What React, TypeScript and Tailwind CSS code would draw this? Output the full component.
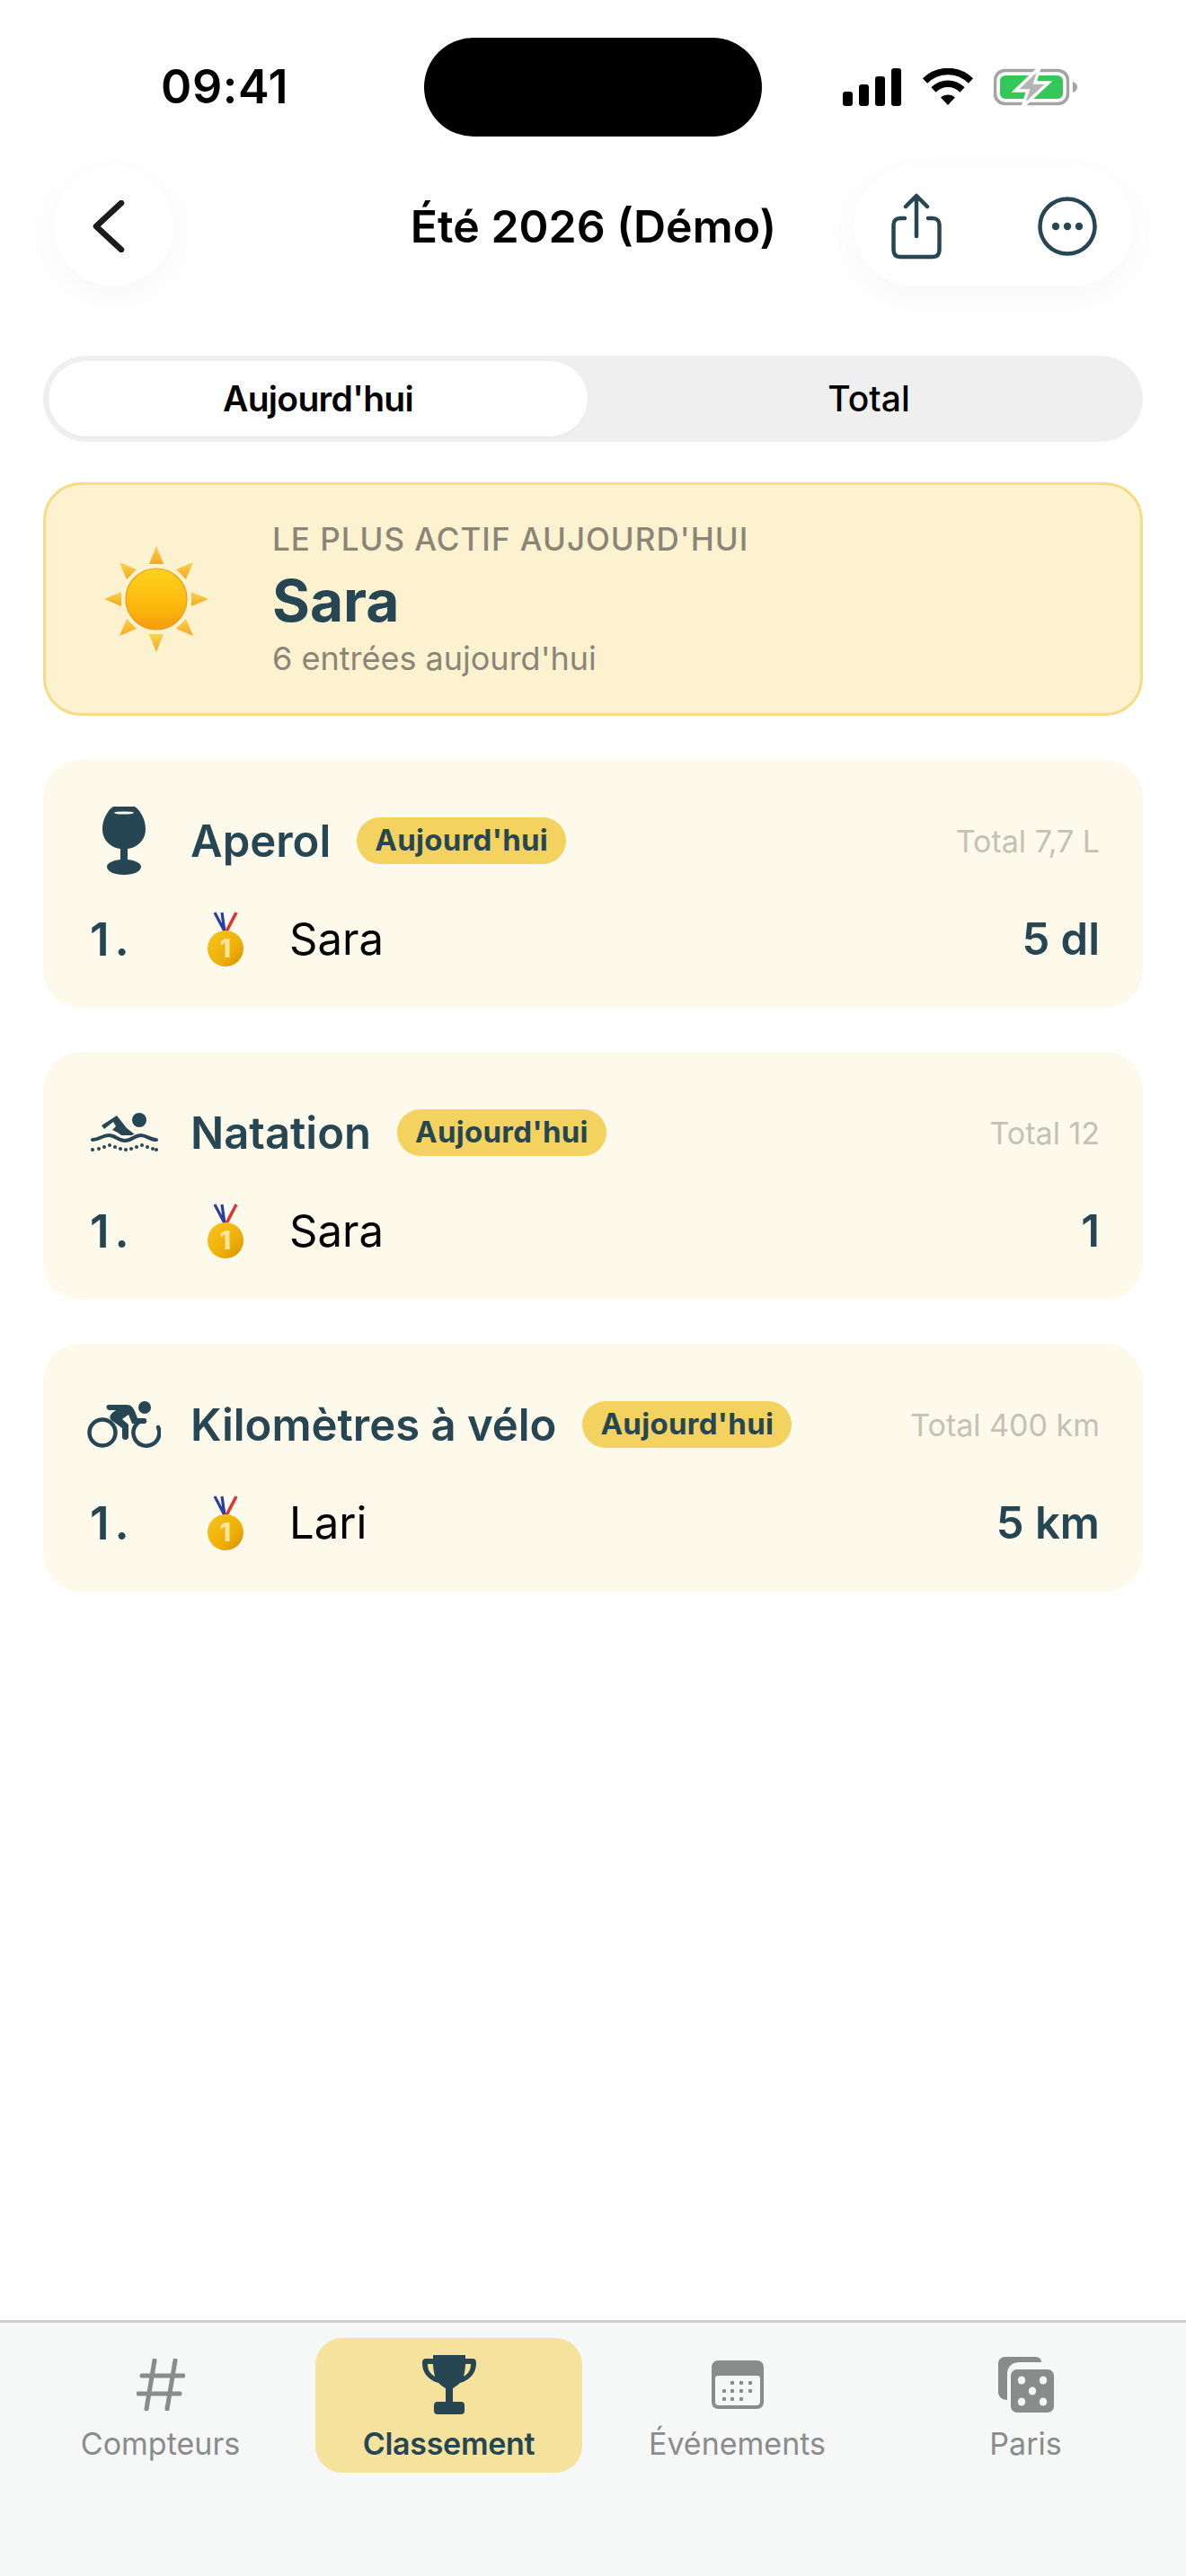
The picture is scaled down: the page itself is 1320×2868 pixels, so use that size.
const NAVY = "#264653";

const Sun = () => (
  <svg width="120" height="120" viewBox="0 0 120 120">
    <defs>
      <linearGradient id="sunBody" x1="0" y1="0" x2="0" y2="1">
        <stop offset="0" stopColor="#ffd21f" />
        <stop offset="0.7" stopColor="#fbb40a" />
        <stop offset="1" stopColor="#f39a12" />
      </linearGradient>
      <linearGradient id="sunRay" x1="0" y1="0" x2="0" y2="1">
        <stop offset="0" stopColor="#fbd24a" />
        <stop offset="1" stopColor="#f6a821" />
      </linearGradient>
    </defs>
    <g fill="url(#sunRay)">
      <polygon points="60,1 68,21 52,21" />
      <polygon points="60,119 68,99 52,99" />
      <polygon points="2,60 21,52 21,68" />
      <polygon points="118,60 99,52 99,68" />
      <polygon points="19,19 38,27 27,38" />
      <polygon points="101,19 82,27 93,38" />
      <polygon points="19,101 38,93 27,82" />
      <polygon points="101,101 82,93 93,82" />
    </g>
    <circle cx="60" cy="60" r="34" fill="url(#sunBody)" stroke="#ee9a1c" strokeWidth="1.2" />
  </svg>
);

const Medal = () => (
  <svg width="42" height="62" viewBox="0 0 42 62">
    <defs>
      <linearGradient id="medalGold" x1="0" y1="0" x2="1" y2="1">
        <stop offset="0" stopColor="#f7c51e" />
        <stop offset="0.6" stopColor="#efb008" />
        <stop offset="1" stopColor="#d98f00" />
      </linearGradient>
    </defs>
    <path d="M21 22 L9 1 H33 Z" fill="#ffffff" />
    <path d="M20 22 L9 1 M20 22 L17 1" fill="none" stroke="#2a3f9e" strokeWidth="3.2" />
    <path d="M22 22 L33 1" fill="none" stroke="#e0352b" strokeWidth="3.6" />
    <circle cx="21" cy="41" r="20" fill="url(#medalGold)" />
    <text x="21" y="51" textAnchor="middle" fontSize="28" fontWeight="800" fontFamily="Inter" fill="#fbe59a">1</text>
  </svg>
);

const Wine = () => (
  <svg width="48" height="76" viewBox="0 0 48 76">
    <path d="M12 0 H36 C43 5 48 15 48 25 C48 38 38 46 28 47 V59 C37 60 43 63 43 67 C43 72 35 76 24 76 C13 76 5 72 5 67 C5 63 11 60 20 59 V47 C10 46 0 38 0 25 C0 15 5 5 12 0 Z" fill={NAVY} />
    <ellipse cx="24" cy="7" rx="11" ry="1.6" fill="#fefaeb" />
  </svg>
);

const Swim = () => (
  <svg width="76" height="44" viewBox="0 0 76 44">
    <circle cx="55" cy="8" r="8" fill={NAVY} />
    <path d="M13 14 L30 3 L41 17 L50 24 C44 24 38 26 33 23 C30 21 27 20 25 19 L29 15 L26 10 L16 18 Z" fill={NAVY} />
    <path d="M27 18 L35 13 L48 25 L35 25 Z" fill={NAVY} />
    <path d="M3 30 C10 30 14 25 21 25 C29 25 31 31 39 31 C47 31 49 25 57 25 C63 25 67 30 74 30" fill="none" stroke={NAVY} strokeWidth="4" strokeLinecap="round" />
    <g fill={NAVY}>
      <circle cx="3" cy="41" r="2" /><circle cx="10" cy="40" r="2" /><circle cx="16" cy="38" r="2" />
      <circle cx="22" cy="36" r="2" /><circle cx="28" cy="38" r="2" /><circle cx="34" cy="40" r="2" />
      <circle cx="40" cy="41" r="2" /><circle cx="46" cy="40" r="2" /><circle cx="52" cy="38" r="2" />
      <circle cx="58" cy="36" r="2" /><circle cx="64" cy="38" r="2" /><circle cx="70" cy="40" r="2" /><circle cx="74" cy="41" r="2" />
    </g>
  </svg>
);

const Bike = () => (
  <svg width="82" height="52" viewBox="0 0 82 52">
    <circle cx="17" cy="35" r="14.5" fill="none" stroke={NAVY} strokeWidth="4.5" />
    <path d="M58 23 A14.5 14.5 0 1 0 79 29" fill="none" stroke={NAVY} strokeWidth="4.5" strokeLinecap="round" />
    <circle cx="64" cy="7" r="7" fill={NAVY} />
    <path d="M24 4 H44 C49 4 51 7 53 11 L56 19 H64 C67 19 67 25 64 25 H50 L46 15 L39 20 L46 26 V40 C46 44 39 44 39 40 V30 L28 22 C24 19 25 16 28 13 L32 10 H25 C21 10 20 4 24 4 Z" fill={NAVY} />
  </svg>
);

const Share = () => (
  <svg width="56" height="74" viewBox="0 0 56 74" fill="none" stroke={NAVY} strokeWidth="4.5" strokeLinecap="round" strokeLinejoin="round">
    <path d="M15 28 H10 C5 28 2.5 31 2.5 35 V63 C2.5 68 5 71 10 71 H46 C51 71 53.5 68 53.5 63 V35 C53.5 31 51 28 46 28 H41" />
    <path d="M28 48 V4 M16 15 L28 3 L40 15" />
  </svg>
);

const More = () => (
  <svg width="66" height="66" viewBox="0 0 66 66">
    <circle cx="33" cy="33" r="30.5" fill="none" stroke={NAVY} strokeWidth="4.5" />
    <circle cx="20" cy="33" r="4.2" fill={NAVY} />
    <circle cx="33" cy="33" r="4.2" fill={NAVY} />
    <circle cx="46" cy="33" r="4.2" fill={NAVY} />
  </svg>
);

const Signal = () => (
  <svg width="66" height="42" viewBox="0 0 66 42" fill="#000">
    <rect x="0" y="26" width="11" height="16" rx="3" />
    <rect x="18" y="18" width="11" height="24" rx="3" />
    <rect x="36" y="9" width="11" height="33" rx="3" />
    <rect x="54" y="0" width="11" height="42" rx="3" />
  </svg>
);

const Wifi = () => (
  <svg width="58" height="42" viewBox="0 0 58 42" fill="none" stroke="#000" strokeWidth="7.5">
    <path d="M3.5 14 C18 0 40 0 54.5 14" />
    <path d="M13 24 C22 15 36 15 45 24" />
    <path d="M29 41 L21 32.5 C25 28.5 33 28.5 37 32.5 Z" fill="#000" stroke="none" />
  </svg>
);

const Battery = () => (
  <svg width="94" height="44" viewBox="0 0 94 44">
    <rect x="1.5" y="3.5" width="81" height="37" rx="11" fill="none" stroke="#a3a3a3" strokeWidth="3.5" />
    <rect x="7" y="9" width="70" height="26" rx="6" fill="#34c759" />
    <path d="M88 16 C91 17 93 19 93 22 C93 25 91 27 88 28 Z" fill="#a3a3a3" />
    <path d="M51 0 L24 26 H38 L32 44 L61 17 H46 Z" fill="#b4b4b4" stroke="#ffffff" strokeWidth="3.5" />
  </svg>
);

const Hash = () => (
  <svg width="54" height="58" viewBox="0 0 54 58" fill="none" stroke="#8a8c8c" strokeWidth="5" strokeLinecap="round">
    <path d="M20 2 L11 56 M43 2 L34 56 M6 19 H52 M2 39 H48" />
  </svg>
);

const Trophy = () => (
  <svg width="60" height="66" viewBox="0 0 60 66">
    <path d="M12 0 H48 V4 H56 C59 4 60 6 60 9 C60 20 53 28 42 31 C39 34 36 36 34 37 V52 H26 V37 C24 36 21 34 18 31 C7 28 0 20 0 9 C0 6 1 4 4 4 H12 Z M6 10 C6 17 9 21 14 24 C13 19 12 15 12 10 Z M54 10 H48 C48 15 47 19 46 24 C51 21 54 17 54 10 Z" fill={NAVY} fillRule="evenodd" />
    <rect x="13" y="52" width="34" height="14" rx="4" fill={NAVY} />
  </svg>
);

const Calendar = () => (
  <svg width="58" height="54" viewBox="0 0 58 54" fill="#8a8c8c">
    <path fillRule="evenodd" d="M8 0 H50 C55 0 58 3 58 8 V46 C58 51 55 54 50 54 H8 C3 54 0 51 0 46 V8 C0 3 3 0 8 0 Z M7 17 C5 17 4 18 4 20 V46 C4 48 5 50 8 50 H50 C53 50 54 48 54 46 V20 C54 18 53 17 51 17 Z" />
    <rect x="21" y="23" width="4" height="4" rx="1" /><rect x="31" y="23" width="4" height="4" rx="1" /><rect x="41" y="23" width="4" height="4" rx="1" />
    <rect x="12" y="32" width="4" height="4" rx="1" /><rect x="21" y="32" width="4" height="4" rx="1" /><rect x="31" y="32" width="4" height="4" rx="1" /><rect x="41" y="32" width="4" height="4" rx="1" />
    <rect x="12" y="41" width="4" height="4" rx="1" /><rect x="21" y="41" width="4" height="4" rx="1" /><rect x="31" y="41" width="4" height="4" rx="1" />
  </svg>
);

const Dice = () => (
  <svg width="62" height="62" viewBox="0 0 62 62" fill="#8a8c8c">
    <path d="M8 0 H41 C45 0 48 2 48 6 H24 C15 6 10 11 10 20 V48 C4 48 0 44 0 39 V8 C0 3 3 0 8 0 Z" />
    <rect x="14" y="14" width="48" height="48" rx="7" />
    <g fill="#f6f7f7">
      <ellipse cx="26" cy="26" rx="4.2" ry="4.6" /><ellipse cx="50" cy="26" rx="4.2" ry="4.6" />
      <ellipse cx="38" cy="38" rx="4.2" ry="4.6" />
      <ellipse cx="26" cy="50" rx="4.2" ry="4.6" /><ellipse cx="50" cy="50" rx="4.2" ry="4.6" />
    </g>
  </svg>
);

const activities = [
  { title: "Aperol", total: "Total 7,7 L", name: "Sara", value: "5 dl", icon: <Wine /> },
  { title: "Natation", total: "Total 12", name: "Sara", value: "1", icon: <Swim /> },
  { title: "Kilomètres à vélo", total: "Total 400 km", name: "Lari", value: "5 km", icon: <Bike /> },
];

const tabs = [
  { label: "Compteurs", icon: <Hash /> },
  { label: "Classement", icon: <Trophy />, active: true },
  { label: "Événements", icon: <Calendar /> },
  { label: "Paris", icon: <Dice /> },
];

export default function App() {
  return (
    <div className="w-[1320px] h-[2868px] flex flex-col bg-white font-['Inter',sans-serif] text-black overflow-hidden">
      {/* status bar */}
      <div className="grid grid-cols-[1fr_376px_1fr] items-center h-[110px] mt-[42px]">
        <span className="justify-self-start ml-[179px] text-[52px] font-semibold leading-none tracking-[0.6px]">09:41</span>
        <div className="h-[110px] rounded-full bg-black" />
        <div className="flex items-center justify-self-start ml-[90px] gap-[22px]">
          <Signal />
          <Wifi />
          <Battery />
        </div>
      </div>

      {/* header */}
      <div className="grid grid-cols-[1fr_auto_1fr] items-center h-[133px] mt-[33px] pl-[60px] pr-[59px]">
        <div className="justify-self-start w-[132px] h-[133px] rounded-full bg-white flex items-center justify-center shadow-[0_10px_50px_rgba(0,0,0,0.04)]">
          <svg width="36" height="58" viewBox="0 0 36 58" fill="none" stroke="#1c1c1e" strokeWidth="6.5" strokeLinecap="round" strokeLinejoin="round" className="mr-[10px]">
            <path d="M32 3 L4 29 L32 55" />
          </svg>
        </div>
        <h1 className="text-[50px] font-semibold leading-none">Été 2026 (Démo)</h1>
        <div className="justify-self-end w-[311px] h-[133px] rounded-full bg-white flex items-center pl-[42px] pr-[40px] justify-between shadow-[0_10px_50px_rgba(0,0,0,0.04)]">
          <Share />
          <More />
        </div>
      </div>

      {/* segmented control */}
      <div className="flex items-center mx-[48px] mt-[78px] h-[96px] p-[6px] rounded-full bg-[#efefef]">
        <div className="w-[600px] h-full rounded-full bg-white flex items-center justify-center text-[39px] font-semibold tracking-[-0.7px] shadow-[0_1px_3px_rgba(0,0,0,0.04)]">
          Aujourd'hui
        </div>
        <div className="flex-1 flex items-center justify-center pl-[14px] text-[39px] font-medium">Total</div>
      </div>

      {/* most active */}
      <div className="flex items-center mx-[48px] mt-[45px] h-[260px] rounded-[42px] border-[3px] border-[#f5dc85] bg-[#fcf2d0]">
        <div className="ml-[63px] w-[120px] flex justify-center">
          <Sun />
        </div>
        <div className="ml-[69px] flex flex-col pb-[6px]">
          <span className="text-[35px] font-medium leading-[44px] tracking-[1px] text-[#8b8578]">LE PLUS ACTIF AUJOURD'HUI</span>
          <span className="text-[64px] font-bold leading-[94px] text-[#264653]">Sara</span>
          <span className="text-[36px] leading-[34px] text-[#8b8578]">6 entrées aujourd'hui</span>
        </div>
      </div>

      {/* activities */}
      <div className="flex flex-col gap-[49px] mx-[48px] mt-[49px]">
        {activities.map((a) => (
          <div key={a.title} className="flex flex-col h-[276px] rounded-[42px] bg-[#fefaeb] pl-[49px] pr-[48px] pt-[48px]">
            <div className="flex items-center h-[84px]">
              <div className="w-[82px] flex justify-center">{a.icon}</div>
              <span className="ml-[33px] text-[49px] font-semibold leading-none text-[#264653]">{a.title}</span>
              <span className="ml-[29px] h-[52px] px-[20px] rounded-full bg-[#f3d25f] flex items-center text-[33px] font-bold tracking-[0.3px] text-[#264653]">
                Aujourd'hui
              </span>
              <span className="ml-auto text-[34px] text-[#c4c1b6]">{a.total}</span>
            </div>
            <div className="flex items-center h-[84px] mt-[26px]">
              <span className="w-[120px] pl-[3px] text-[51px] font-semibold tracking-[6px] text-[#264653]">1.</span>
              <div className="w-[62px] ml-[3px] flex justify-center">
                <Medal />
              </div>
              <span className="ml-[40px] text-[49px]">{a.name}</span>
              <span className="ml-auto text-[49px] font-semibold text-[#264653]">{a.value}</span>
            </div>
          </div>
        ))}
      </div>

      {/* tab bar */}
      <div className="mt-auto h-[285px] border-t-[3px] border-[#cfcfcf] bg-[#f6f7f7] pt-[17px]">
        <div className="grid grid-cols-[repeat(4,297px)] gap-[24px] pl-[30px]">
          {tabs.map((t) => (
            <div
              key={t.label}
              className={
                t.active
                  ? "h-[150px] rounded-[30px] bg-[#f5e39d] flex flex-col items-center pt-[17px] text-[34px] font-semibold tracking-[-0.3px] text-[#264653]"
                  : "h-[150px] rounded-[30px] flex flex-col items-center pt-[17px] text-[34px] text-[#8a8c8c]"
              }
            >
              <div className="h-[70px] flex items-center justify-center">{t.icon}</div>
              <span className="mt-[10px] leading-[41px]">{t.label}</span>
            </div>
          ))}
        </div>
      </div>
    </div>
  );
}
